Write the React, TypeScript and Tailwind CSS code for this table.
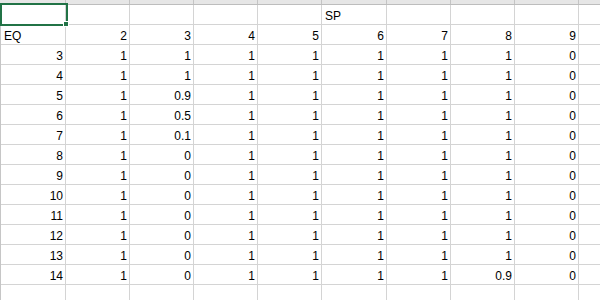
const widths = [66, 64, 64, 64, 64, 65, 64, 64, 64];

const full = ['1', '1', '1', '1', '1', '1', '1', '0'];

const rows: string[][] = [
  ['', '', '', '', '', 'SP', '', '', ''],
  ['EQ', '2', '3', '4', '5', '6', '7', '8', '9'],
  ['3', ...full],
  ['4', ...full],
  ['5', '1', '0.9', '1', '1', '1', '1', '1', '0'],
  ['6', '1', '0.5', '1', '1', '1', '1', '1', '0'],
  ['7', '1', '0.1', '1', '1', '1', '1', '1', '0'],
  ['8', '1', '0', '1', '1', '1', '1', '1', '0'],
  ['9', '1', '0', '1', '1', '1', '1', '1', '0'],
  ['10', '1', '0', '1', '1', '1', '1', '1', '0'],
  ['11', '1', '0', '1', '1', '1', '1', '1', '0'],
  ['12', '1', '0', '1', '1', '1', '1', '1', '0'],
  ['13', '1', '0', '1', '1', '1', '1', '1', '0'],
  ['14', '1', '0', '1', '1', '1', '1', '0.9', '0'],
  ['', '', '', '', '', '', '', '', ''],
];

function Cell({ value, width, isNumber }: { value: string; width: number; isNumber: boolean }) {
  return (
    <div
      className={`flex h-full shrink-0 items-end border-r border-[#d4d4d4] pb-[1px] ${
        isNumber ? 'justify-end pr-[2px]' : 'justify-start pl-[3px]'
      }`}
      style={{ width }}
    >
      <span className="leading-[14px]">{value}</span>
    </div>
  );
}

export default function App() {
  return (
    <div
      className="relative h-[300px] w-[600px] overflow-hidden bg-white text-[12px] text-black"
      style={{ fontFamily: '"Liberation Sans", Arial, sans-serif' }}
    >
      {/* column header strip, mostly scrolled off */}
      <div className="flex h-[5px] border-b border-[#bdbdbd] bg-[#e6e6e6]">
        {widths.map((w, i) => (
          <div key={i} className="h-full shrink-0 border-r border-[#c4c4c4]" style={{ width: w }} />
        ))}
      </div>

      <div className="border-l border-[#c6c6c6]">
        {rows.map((row, r) => (
          <div key={r} className="flex h-[20px] border-b border-[#d4d4d4]">
            {row.map((v, c) => (
              <Cell
                key={c}
                value={v}
                width={c === 0 ? widths[0] - 1 : widths[c]}
                isNumber={v !== '' && !isNaN(Number(v))}
              />
            ))}
            <div className="h-full flex-1" />
          </div>
        ))}
      </div>

      {/* active cell selection */}
      <div className="pointer-events-none absolute left-0 top-[3px] h-[23px] w-[68px] border-2 border-[#217346]" />
      <div className="pointer-events-none absolute left-[63px] top-[21px] h-[6px] w-[6px] border border-white bg-[#217346]" />
    </div>
  );
}
